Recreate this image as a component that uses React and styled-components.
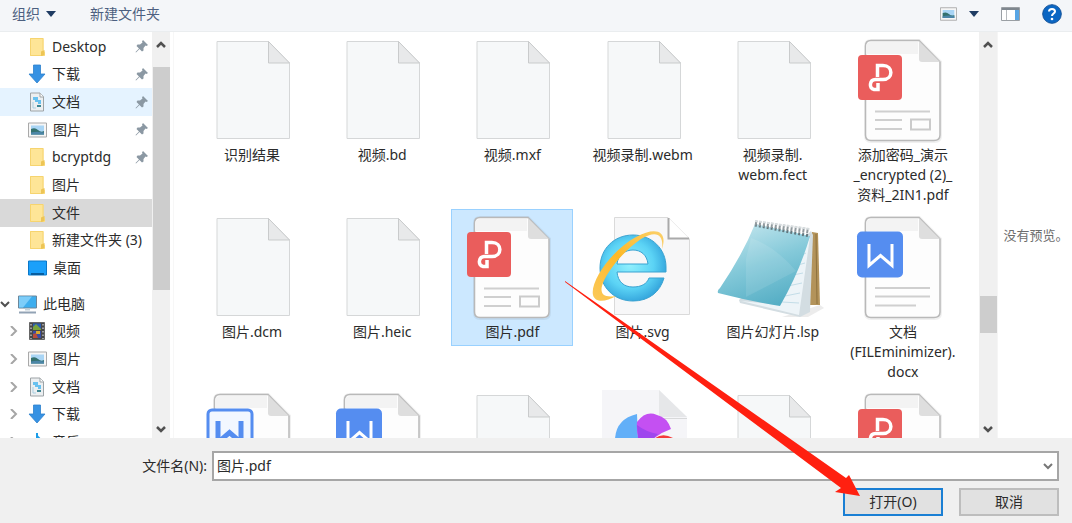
import React from 'react';
import styled, { createGlobalStyle } from 'styled-components';

const GlobalStyle = createGlobalStyle`
  * { box-sizing: border-box; }
  body {
    margin: 0;
    background: #fff;
    color: #2b2b2b;
    font: 14px/20px "Noto Sans", "Noto Sans CJK SC", sans-serif;
  }
  button, input { font: inherit; color: inherit; margin: 0; }
  ul { list-style: none; margin: 0; padding: 0; }
  svg { display: block; flex: none; }
`;

const Dialog = styled.div`
  position: relative;
  display: flex;
  flex-direction: column;
  height: 100vh;
  overflow: hidden;
`;

const Toolbar = styled.header`
  display: flex;
  align-items: center;
  flex: none;
  height: 32px;
  padding: 0 10px 4px 12px;
  background: #f4f6f9;
  border-bottom: 1px solid #eaedef;
  color: #4c5f80;
`;

const ToolButton = styled.button`
  display: flex;
  align-items: center;
  gap: ${(p) => p.$gap || 0}px;
  padding: 0;
  border: 0;
  background: none;
`;

const ToolGroup = styled.div`
  display: flex;
  align-items: center;
  gap: 34px;
  flex: 1;
`;

const ViewTools = styled(ToolGroup)`
  flex: none;
  gap: 22px;
`;

const Body = styled.div`
  display: flex;
  flex: 1;
  min-height: 0;
`;

const Sidebar = styled.nav`
  flex: none;
  width: 152px;
  padding-top: 1px;
  overflow: hidden;
`;

const Tree = styled.ul`
  display: grid;
  grid-template-rows: repeat(${(p) => p.$rows}, 1fr);
  height: ${(p) => p.$height}px;
  margin-bottom: 8px;
`;

const TreeItem = styled.li`
  display: flex;
  min-height: 0;
  background: ${(p) => p.$background || 'transparent'};
`;

const TreeLink = styled.a`
  display: flex;
  flex: 1;
  align-items: center;
  padding-right: 4px;
  color: inherit;
  text-decoration: none;
  white-space: nowrap;
`;

const Expander = styled.span`
  display: flex;
  justify-content: flex-end;
  flex: none;
  width: ${(p) => (p.$root ? 10 : 18)}px;
  margin-right: ${(p) => (p.$root ? 8 : 10)}px;
`;

const TreeName = styled.span`
  flex: 1;
  margin-left: 6px;
`;

const ScrollTrack = styled.div`
  display: grid;
  grid-template-rows: ${(p) => p.$before}px ${(p) => p.$thumb}px 1fr;
  justify-items: center;
  flex: none;
  width: 18px;
  background: #f0f0f0;
`;

const ScrollThumb = styled.div`
  width: 17px;
  background: #cdcdcd;
`;

const ScrollArrow = styled.button`
  align-self: ${(p) => (p.$end ? 'end' : 'start')};
  padding: 8px 4px;
  border: 0;
  background: none;
  height: 22px;
`;

const Files = styled.main`
  display: grid;
  grid-template-columns: repeat(6, 1fr);
  grid-auto-rows: 177px;
  align-content: start;
  align-items: start;
  column-gap: 8px;
  flex: 1;
  min-width: 0;
  padding: 0 15px 0 17px;
  margin-left: 3px;
  border-left: 1px solid #f7f7f7;
  overflow: hidden;
`;

const Tile = styled.button`
  display: flex;
  flex-direction: column;
  align-items: center;
  padding: 0 0 4px;
  border: 0;
  outline: ${(p) => (p.$selected ? '1px solid #99d1ff' : 'none')};
  outline-offset: -1px;
  background: ${(p) => (p.$selected ? '#cce8ff' : 'transparent')};
`;

const FileName = styled.span`
  white-space: pre;
  text-align: center;
`;

const Preview = styled.aside`
  display: flex;
  align-items: center;
  justify-content: center;
  flex: none;
  width: 75px;
  padding-left: 2px;
  border-left: 1px solid #f5f5f5;
  color: #6d6d6d;
  font-size: 13px;
  white-space: nowrap;
`;

const Footer = styled.form`
  display: flex;
  flex-direction: column;
  gap: 7px;
  flex: none;
  padding: 13px 13px 7px;
  background: #f0f0f0;
`;

const FieldRow = styled.div`
  display: flex;
  align-items: center;
  gap: 5px;
`;

const FieldLabel = styled.label`
  width: 194px;
  text-align: right;
`;

const ComboBox = styled.div`
  display: flex;
  flex: 1;
  height: 30px;
  border: 2px solid #a6a6a6;
  background: #fff;
`;

const ComboInput = styled.input`
  flex: 1;
  min-width: 0;
  padding: 0 3px;
  border: 0;
  outline: 0;
  background: none;
`;

const ComboButton = styled.button`
  padding: 0 4px;
  border: 0;
  background: none;
`;

const Actions = styled.div`
  display: flex;
  justify-content: flex-end;
  gap: 16px;
`;

const ActionButton = styled.button`
  width: 100px;
  height: 28px;
  padding: 0;
  border: 2px solid ${(p) => (p.$primary ? '#1a7fd4' : '#bdbdbd')};
  background: #e1e1e1;
`;

const PointerArrow = styled.svg`
  position: absolute;
  left: 565px;
  top: 281px;
  pointer-events: none;
`;

const Caret = () => (
  <svg width="10" height="6" viewBox="0 0 10 6"><path d="M0 0H10L5 6Z" fill="#1f3c63" /></svg>
);

const Chevron = ({ dir, color = '#505050', size = 10, weight = 2 }) => {
  const d = {
    up: 'M1 7L5 3L9 7',
    down: 'M1 3L5 7L9 3',
    right: 'M3 0L8 5L3 10',
  }[dir];
  return (
    <svg width={size} height={size} viewBox="0 0 10 10">
      <path d={d} fill="none" stroke={color} strokeWidth={weight} />
    </svg>
  );
};

const Pin = () => (
  <svg width="13" height="13" viewBox="0 0 13 13">
    <path d="M8 0L13 5L11.500 6L10.500 5.500L8.500 8L8.500 10.500L7 11.500L4.500 9L1 12.500L.5 12L4 8.500L1.500 6L2.500 4.500L5 4.500L7.500 2.500L7 1.500Z" fill="#8b98a3" />
  </svg>
);

const FolderIcon = () => (
  <svg width="18" height="20" viewBox="0 0 18 20">
    <path d="M2 1H15.500V14L17 15V19H2Z" fill="#fde08a" />
    <path d="M2.500 1.500H15V18.500H2.500Z" fill="#fee597" stroke="#f6d46f" />
    <path d="M13 14.500L16.500 13V18L13 19Z" fill="#edc556" />
  </svg>
);

const DownloadIcon = () => (
  <svg width="18" height="20" viewBox="0 0 18 20">
    <path d="M5.500 1H12.500V10H17L9 19L1 10H5.500Z" fill="#3792e3" stroke="#2c80cd" strokeWidth=".8" />
  </svg>
);

const DocumentIcon = () => (
  <svg width="18" height="20" viewBox="0 0 18 20">
    <path d="M2.500 1H12L15.500 4.500V19H2.500Z" fill="#eceff1" stroke="#9da3a6" />
    <path d="M12 1V5H15.500" fill="#fff" stroke="#9da3a6" />
    <path d="M5 5H10V8H5Z M7 8H13V12H10V10H7Z" fill="#69c1ef" />
    <path d="M9 13H13V15H9Z" fill="#3d8794" />
    <path d="M5 10V16H8" fill="none" stroke="#a9cfe0" />
  </svg>
);

const PictureIcon = ({ width = 19 }) => (
  <svg width={width} height="16" viewBox="0 0 19 16">
    <path d="M.5 1H18.500V15H.5Z" fill="#f6f6f6" stroke="#a9a9a9" />
    <path d="M3 3.500H16V12.500H3Z" fill="#a9d5f5" />
    <path d="M3 7Q7 5 10 8T16 9V12.500H3Z" fill="#34716e" />
    <path d="M3 10.500Q9 9 16 10.500V12.500H3Z" fill="#4c86a8" />
  </svg>
);

const DesktopIcon = () => (
  <svg width="19" height="16" viewBox="0 0 19 16">
    <path d="M.5 1H18.500V15H.5Z" fill="#1ba0fa" stroke="#0b78c9" />
    <path d="M3 14H16" stroke="#075d9f" strokeWidth="2" />
  </svg>
);

const ComputerIcon = () => (
  <svg width="19" height="20" viewBox="0 0 19 20">
    <path d="M.5 2H18.500V14H.5Z" fill="#3eaeee" stroke="#6c879a" />
    <path d="M1 2.500H14L5 13.500H1Z" fill="#7dcdf9" />
    <path d="M7 14.500H12V16.500H7Z" fill="#c3d0d9" />
    <path d="M1 18.500H18" stroke="#92a3b5" strokeWidth="2" />
  </svg>
);

const VideoIcon = () => (
  <svg width="18" height="18" viewBox="0 0 18 18">
    <path d="M1.500 .5H16.500V17.500H1.500Z" fill="#474747" stroke="#666" />
    <path d="M5 1.500H13V8H5Z" fill="#2c5fb2" />
    <path d="M5 9H13V16H5Z" fill="#394da5" />
    <path d="M5 5L8 2L13 7V8H5Z" fill="#79a43c" />
    <path d="M8 9H12V12H8Z" fill="#d8a92f" />
    <path d="M5 12L8 11L10 16H5Z" fill="#b94c3b" />
    <path d="M3 2V17M15 2V17" stroke="#b9b9b9" strokeWidth="1.500" strokeDasharray="1.500 2" />
  </svg>
);

const MusicIcon = () => (
  <svg width="18" height="20" viewBox="0 0 18 20">
    <path d="M9 1V15" stroke="#1b9ce8" strokeWidth="2" />
    <path d="M9 1Q10 5 14 7V10L9 6Z" fill="#1b9ce8" />
    <ellipse cx="6" cy="15" rx="4" ry="3" fill="#1b9ce8" />
  </svg>
);

const PaneIcon = () => (
  <svg width="19" height="14" viewBox="0 0 19 14">
    <path d="M.5 .5H18.500V13.500H.5Z" fill="#fff" stroke="#9a9fa4" />
    <path d="M1 2H18" stroke="#7e868e" strokeWidth="2" />
    <path d="M5.500 3V13" stroke="#b7bbbf" />
    <path d="M14 3H18V13H14Z" fill="#58a5e4" />
  </svg>
);

const HelpIcon = () => (
  <svg width="20" height="20" viewBox="0 0 20 20">
    <circle cx="10" cy="10" r="9.300" fill="#0b66c3" stroke="#17549a" />
    <path d="M7 7.500C7 4 13 4 13 7.500C13 9.500 10 9.700 10 12" fill="none" stroke="#fff" strokeWidth="2" />
    <circle cx="10" cy="15" r="1.300" fill="#fff" />
  </svg>
);

const FileArt = ({ children }) => (
  <svg width="122" height="113" viewBox="0 0 122 113">{children}</svg>
);

const BlankFile = () => (
  <FileArt>
    <path d="M26 9.500H77.500L98.500 31V106.500H26Z" fill="#f6f8f9" stroke="#d5d7d8" />
    <path d="M77.500 9.500V31H98.500Z" fill="#e8e9ea" stroke="#c9cbcc" />
  </FileArt>
);

const PaperSheet = () => (
  <>
    <path d="M29 9H77L98 30V104Q98 109 93 109H29Q24 109 24 104V14Q24 9 29 9Z" fill="none" stroke="#000" strokeOpacity=".06" strokeWidth="4" />
    <path d="M29 8.500H77L98 30V103Q98 108.500 92 108.500H29Q23.500 108.500 23.500 103V14Q23.500 8.500 29 8.500Z" fill="#fdfdfd" stroke="#b9b9b9" strokeWidth="1.500" />
    <path d="M30 10H76V22H24V15Q24 10 30 10Z" fill="#f3f3f3" />
    <path d="M77 9L98 30H80Q77 30 77 27Z" fill="#dedede" />
  </>
);

const PdfFile = () => (
  <FileArt>
    <PaperSheet />
    <rect x="16" y="23" width="44" height="45" rx="4" fill="#ea5d5c" />
    <path d="M35.500 45V33.500H41C51.500 33.500 51.500 47.500 41 47.500H33.500C27.500 47.500 26.500 56.500 32 57.500H36V51" fill="none" stroke="#fff" strokeWidth="3.500" />
    <path d="M33 79.500H88M33 88H60M33 97H60" stroke="#cfcfcf" strokeWidth="2" />
    <rect x="69" y="87.500" width="19" height="10" fill="none" stroke="#cbcbcb" strokeWidth="2" />
  </FileArt>
);

const WordFile = ({ outlined }) => (
  <FileArt>
    <PaperSheet />
    {outlined ? (
      <rect x="17" y="24" width="44" height="44" rx="4" fill="#f2f7ff" stroke="#558df0" strokeWidth="3" />
    ) : (
      <rect x="15" y="22.500" width="46" height="46" rx="5" fill="#558df0" />
    )}
    <path
      d="M27 35V56.500L38.500 46.500L50 56.500V35"
      fill="none"
      stroke={outlined ? '#558df0' : '#fff'}
      strokeWidth={outlined ? 5 : 3}
    />
    <path d="M33 79H88M33 87.500H88M33 96.500H74" stroke="#cfcfcf" strokeWidth="2" />
  </FileArt>
);

const BrowserFile = () => (
  <FileArt>
    <defs>
      <radialGradient id="globe" cx=".45" cy=".45" r=".6">
        <stop offset="0" stopColor="#92f0fd" />
        <stop offset=".6" stopColor="#5bd3f5" />
        <stop offset="1" stopColor="#2f9fd9" />
      </radialGradient>
      <linearGradient id="ring" x1="0" y1="1" x2="1" y2="0">
        <stop offset="0" stopColor="#fbc95c" />
        <stop offset=".5" stopColor="#fdb927" />
        <stop offset="1" stopColor="#fbd06a" />
      </linearGradient>
    </defs>
    <path d="M32.500 8.500H86L107.500 30V105.500H32.500Z" fill="#f7f7f8" stroke="#dadada" />
    <path d="M86.500 9V29.500H107" fill="#fff" stroke="#aaa" strokeWidth="2" />
    <path
      fillRule="evenodd"
      d="M51 26C70 26 84 40 84 58V63H35C36 73 42 78 51 78C59 78 65 75 67 69H82C78 83 67 92 51 92C32 92 18 78 18 59C18 40 32 26 51 26ZM35 55H66C65 46 59 41 51 41C43 41 36 46 35 55Z"
      fill="url(#globe)"
      stroke="#3ba3d1"
    />
    <path d="M80 40C86 22 74 17 54 28C30 41 8 72 11 86C13 94 24 93 34 87C22 89 18 85 20 77C23 65 41 42 59 30C74 21 82 25 80 40Z" fill="url(#ring)" />
  </FileArt>
);

const NotepadFile = () => (
  <FileArt>
    <defs>
      <linearGradient id="cover" x1=".2" y1="0" x2=".6" y2="1">
        <stop offset="0" stopColor="#c3e6ee" />
        <stop offset=".5" stopColor="#84c9d9" />
        <stop offset="1" stopColor="#55aec5" />
      </linearGradient>
    </defs>
    <path d="M70 108L108 96L112 99L96 108Z" fill="#ececec" />
    <path d="M100 23L106 24L108 96L97 96Z" fill="#b3935a" />
    <path d="M104 25L105 95" stroke="#8d713e" />
    <path d="M99 22L101 26L98 103L88 108L28 94L27 91Z" fill="#d3dde2" />
    <path d="M98 28L87 106L29 92L68 96Z" fill="#edf4f8" />
    <path d="M94 44L90 46M93 54L86 56M91 64L81 66M90 74L76 77M88 84L73 87M87 94L70 93" stroke="#c3dde8" />
    <path d="M43 15L98 27Q88 62 68 97Q37 92 6 84Q5 81 8 79Q31 45 43 15Z" fill="url(#cover)" />
    <path d="M39 29Q64 38 84 62L34 88V50Z" fill="#fff" fillOpacity=".1" />
    <path d="M43 16L98 27" stroke="#62777e" strokeWidth="3" strokeDasharray="2 2" />
    <path d="M43 14L98 22" stroke="#929b9f" strokeWidth="5" strokeDasharray="2 2" />
    <path d="M43 12L98 20" stroke="#d7dcde" strokeWidth="2" strokeDasharray="3 1" />
  </FileArt>
);

const PetalFile = () => (
  <FileArt>
    <path d="M20 4H77L105 31V113H20Z" fill="#f5f5f8" />
    <path d="M77 4L105 31H77Z" fill="#e6e7e9" />
    <path d="M77 32.500H105" stroke="#d8d9da" />
    <path d="M55 28Q34 33 33 53H56Z" fill="#62aff8" />
    <path d="M72 53Q80 46 91 52V60H72Z" fill="#f43a3c" />
    <path d="M55 36Q64 24 75 29Q85 31 89 43Q80 46 71 53H57Q54 44 55 36Z" fill="#c450f2" />
    <path d="M55 39Q64 46 76 48L71 53H56Z" fill="#9f46ee" />
  </FileArt>
);

const quickAccess = [
  { name: 'Desktop', icon: FolderIcon, pinned: true },
  { name: '下载', icon: DownloadIcon, pinned: true },
  { name: '文档', icon: DocumentIcon, pinned: true, background: '#e5f3ff' },
  { name: '图片', icon: PictureIcon, pinned: true },
  { name: 'bcryptdg', icon: FolderIcon, pinned: true },
  { name: '图片', icon: FolderIcon },
  { name: '文件', icon: FolderIcon, background: '#d9d9d9' },
  { name: '新建文件夹 (3)', icon: FolderIcon },
  { name: '桌面', icon: DesktopIcon },
];

const thisPc = [
  { name: '此电脑', icon: ComputerIcon, root: true },
  { name: '视频', icon: VideoIcon, expandable: true },
  { name: '图片', icon: PictureIcon, expandable: true },
  { name: '文档', icon: DocumentIcon, expandable: true },
  { name: '下载', icon: DownloadIcon, expandable: true },
  { name: '音乐', icon: MusicIcon, expandable: true },
];

const files = [
  { name: '识别结果', art: <BlankFile /> },
  { name: '视频.bd', art: <BlankFile /> },
  { name: '视频.mxf', art: <BlankFile /> },
  { name: '视频录制.webm', art: <BlankFile /> },
  { name: '视频录制.\nwebm.fect', art: <BlankFile /> },
  { name: '添加密码_演示\n_encrypted (2)_\n资料_2IN1.pdf', art: <PdfFile /> },
  { name: '图片.dcm', art: <BlankFile /> },
  { name: '图片.heic', art: <BlankFile /> },
  { name: '图片.pdf', art: <PdfFile />, selected: true },
  { name: '图片.svg', art: <BrowserFile /> },
  { name: '图片幻灯片.lsp', art: <NotepadFile /> },
  { name: '文档\n(FILEminimizer).\ndocx', art: <WordFile /> },
  { art: <WordFile outlined /> },
  { art: <WordFile /> },
  { art: <BlankFile /> },
  { art: <PetalFile /> },
  { art: <BlankFile /> },
  { art: <PdfFile /> },
];

const TreeList = ({ items, height }) => (
  <Tree $rows={items.length} $height={height}>
    {items.map(({ name, icon: Icon, pinned, background, root, expandable }, i) => (
      <TreeItem key={i} $background={background}>
        <TreeLink href="#">
          <Expander $root={root}>
            {root && <Chevron dir="down" />}
            {expandable && <Chevron dir="right" color="#a6a6a6" />}
          </Expander>
          <Icon />
          <TreeName>{name}</TreeName>
          {pinned && <Pin />}
        </TreeLink>
      </TreeItem>
    ))}
  </Tree>
);

const ScrollBar = ({ before, thumb }) => (
  <ScrollTrack $before={before} $thumb={thumb}>
    <ScrollArrow type="button"><Chevron dir="up" weight={2.5} /></ScrollArrow>
    <ScrollThumb />
    <ScrollArrow type="button" $end><Chevron dir="down" weight={2.5} /></ScrollArrow>
  </ScrollTrack>
);

export default function App() {
  return (
    <Dialog>
      <GlobalStyle />
      <Toolbar>
        <ToolGroup>
          <ToolButton type="button" $gap={6}>组织<Caret /></ToolButton>
          <ToolButton type="button">新建文件夹</ToolButton>
        </ToolGroup>
        <ViewTools>
          <ToolButton type="button" $gap={12}><PictureIcon width={17} /><Caret /></ToolButton>
          <ToolButton type="button"><PaneIcon /></ToolButton>
          <ToolButton type="button"><HelpIcon /></ToolButton>
        </ViewTools>
      </Toolbar>
      <Body>
        <Sidebar>
          <TreeList items={quickAccess} height={249} />
          <TreeList items={thisPc} height={166} />
        </Sidebar>
        <ScrollBar before={35} thumb={223} />
        <Files>
          {files.map((file, i) => (
            <Tile key={i} type="button" $selected={file.selected}>
              {file.art}
              {file.name && <FileName>{file.name}</FileName>}
            </Tile>
          ))}
        </Files>
        <ScrollBar before={264} thumb={37} />
        <Preview>没有预览。</Preview>
      </Body>
      <Footer onSubmit={(e) => e.preventDefault()}>
        <FieldRow>
          <FieldLabel htmlFor="file-name">文件名(N):</FieldLabel>
          <ComboBox>
            <ComboInput id="file-name" type="text" defaultValue="图片.pdf" />
            <ComboButton type="button"><Chevron dir="down" color="#777" /></ComboButton>
          </ComboBox>
        </FieldRow>
        <Actions>
          <ActionButton type="submit" $primary>打开(O)</ActionButton>
          <ActionButton type="button">取消</ActionButton>
        </Actions>
      </Footer>
      <PointerArrow width="296" height="217" viewBox="0 0 296 217">
        <path d="M0 0L281 197L284 194L295 215L270 211L276 207L0 1Z" fill="#ff2010" />
      </PointerArrow>
    </Dialog>
  );
}
